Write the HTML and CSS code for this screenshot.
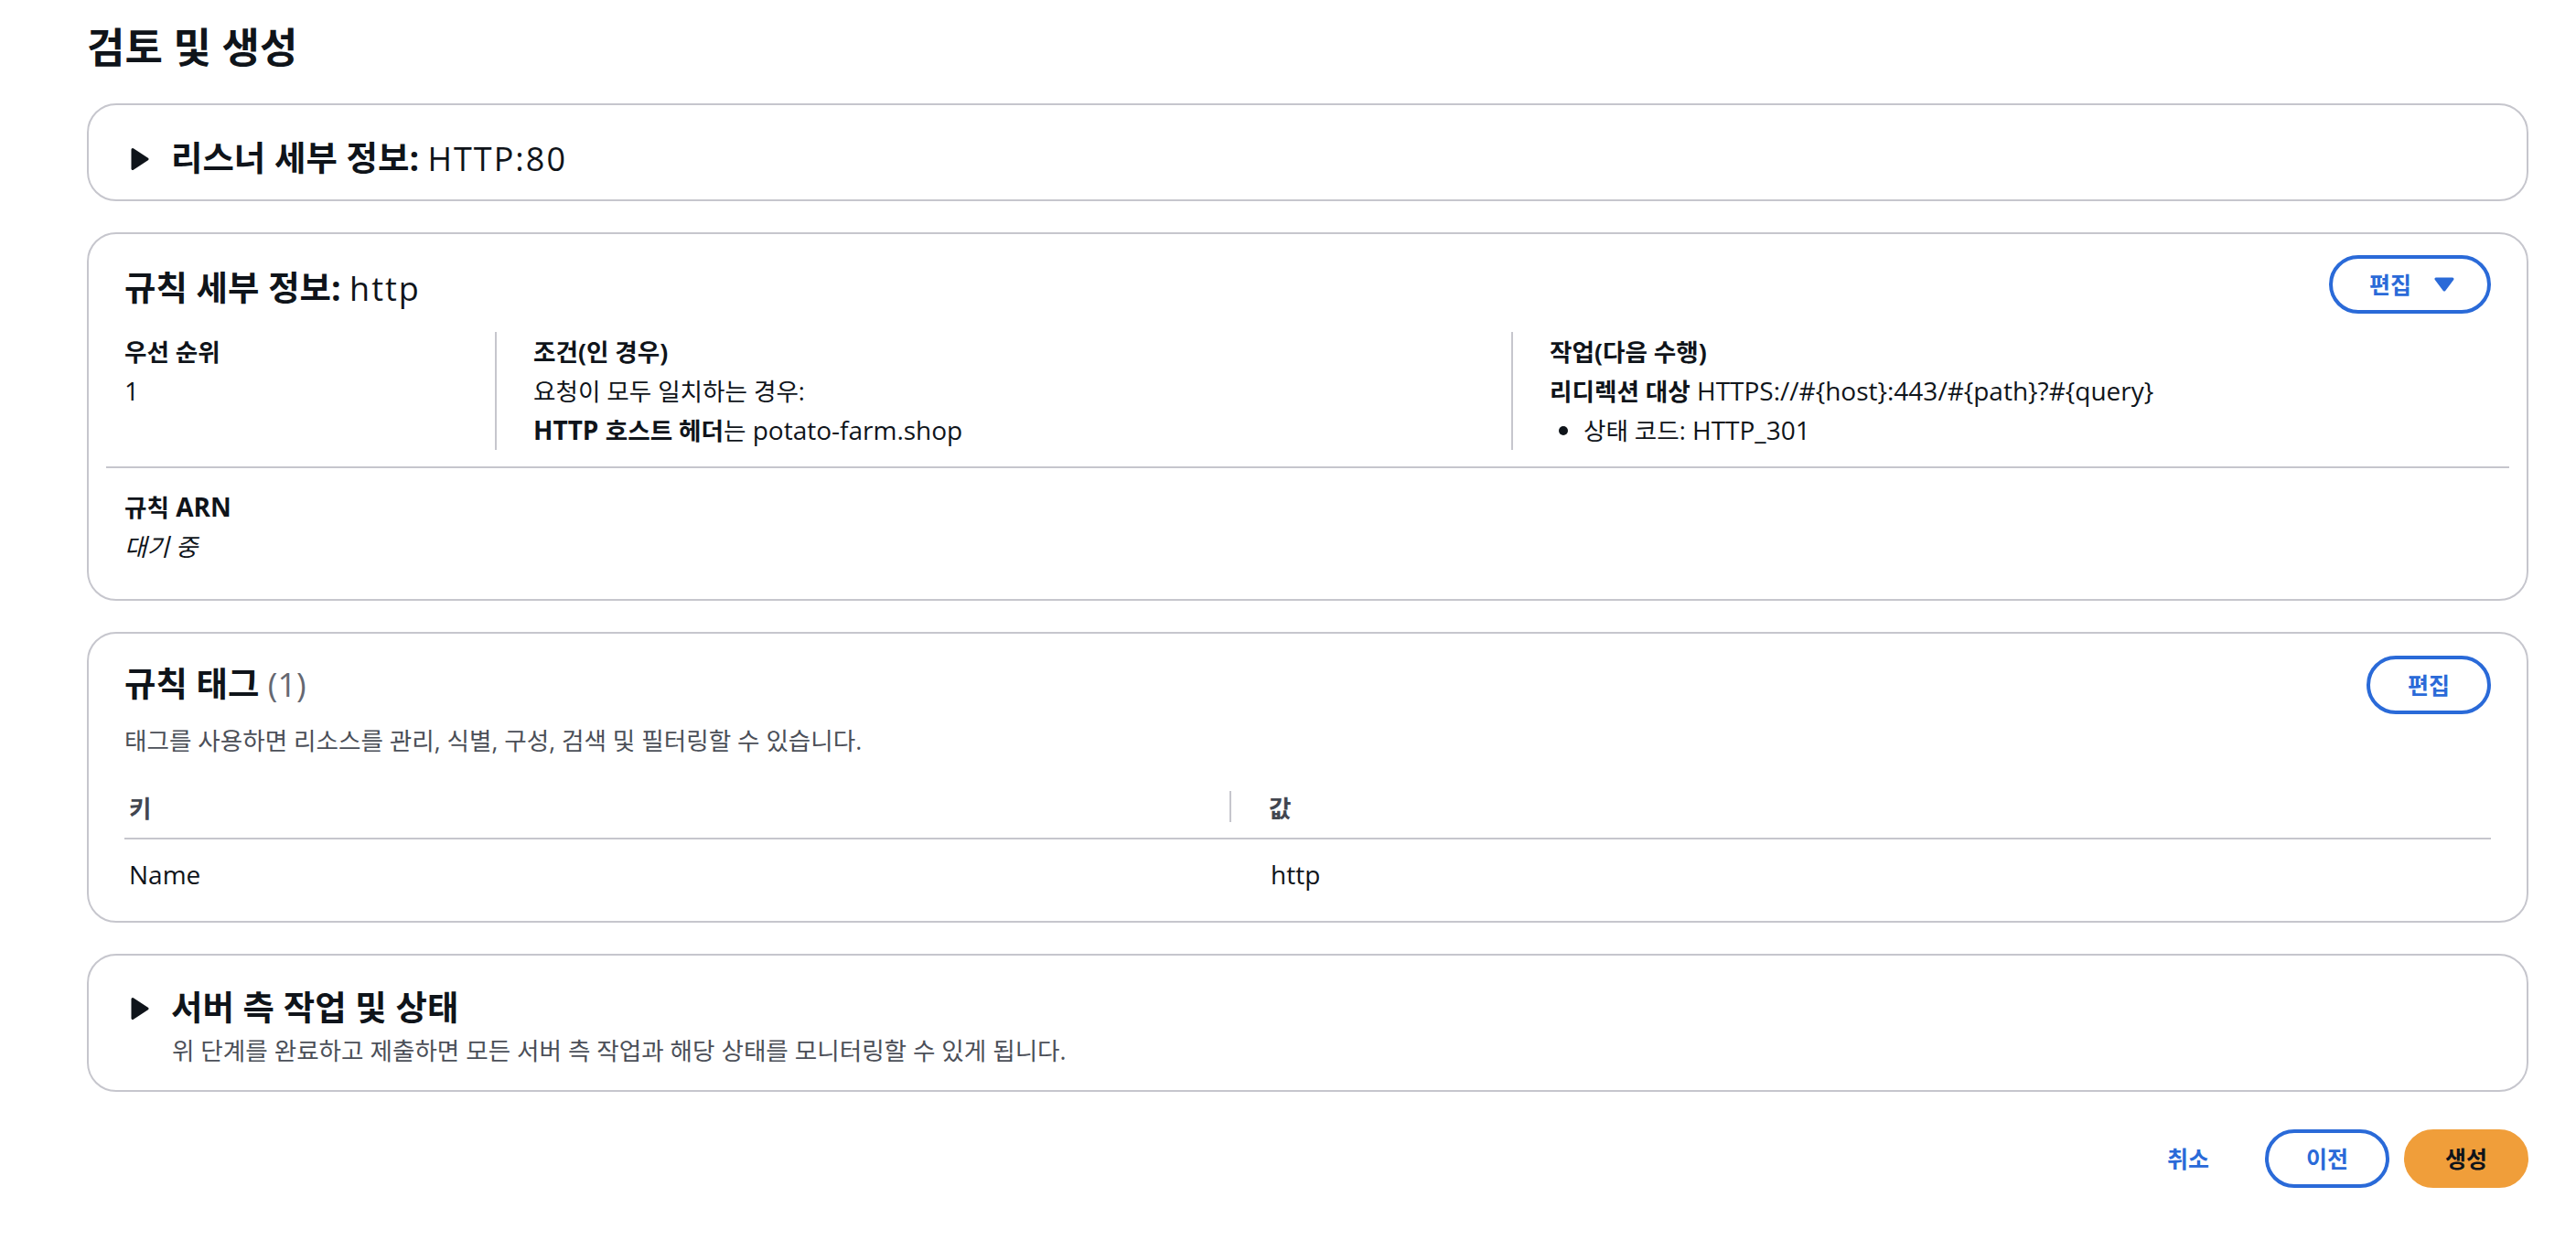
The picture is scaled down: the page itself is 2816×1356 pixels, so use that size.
FILE: index.html
```html
<!DOCTYPE html>
<html lang="ko">
<head>
<meta charset="utf-8">
<title>검토 및 생성</title>
<link rel="stylesheet" href="styles.css">
</head>
<body>
<main class="page">
  <h1 class="page-title">검토 및 생성</h1>

  <section class="card card-collapsed">
    <div class="exp-header">
      <svg class="caret" width="20" height="24" viewBox="0 0 20 24"><polygon points="2,1.5 18,12 2,22.5" /></svg>
      <h2 class="card-title"><span class="hk">리스너 세부 정보:</span> <span class="light">HTTP:80</span></h2>
    </div>
  </section>

  <section class="card card-rule">
    <div class="card-header">
      <h2 class="card-title title-offset"><span class="hk">규칙 세부 정보:</span> <span class="light">http</span></h2>
      <button class="btn btn-normal btn-dropdown" type="button"><span class="btn-label">편집</span><svg class="drop" width="22" height="16" viewBox="0 0 22 16"><polygon points="2,2 20,2 11,14" /></svg></button>
    </div>
    <div class="kv-grid">
      <div class="kv-col">
        <div class="kv-label"><span class="k">우선 순위</span></div>
        <div>1</div>
      </div>
      <div class="kv-col kv-sep">
        <div class="kv-label"><span class="k">조건(인 경우)</span></div>
        <div><span class="k">요청이 모두 일치하는 경우:</span></div>
        <div><b>HTTP <span class="k">호스트 헤더</span></b><span class="k">는</span> potato-farm.shop</div>
      </div>
      <div class="kv-col kv-sep">
        <div class="kv-label"><span class="k">작업(다음 수행)</span></div>
        <div><b><span class="k">리디렉션 대상</span></b> HTTPS://#{host}:443/#{path}?#{query}</div>
        <ul class="bullets">
          <li><span class="k">상태 코드:</span> HTTP_301</li>
        </ul>
      </div>
    </div>
    <hr class="divider">
    <div class="kv-col">
      <div class="kv-label"><span class="k">규칙</span> ARN</div>
      <div class="pending"><span class="k">대기 중</span></div>
    </div>
  </section>

  <section class="card card-tags">
    <div class="card-header">
      <div class="header-main">
        <h2 class="card-title title-offset-sm"><span class="hk">규칙 태그</span> <span class="counter">(1)</span></h2>
        <p class="desc"><span class="k">태그를 사용하면 리소스를 관리, 식별, 구성, 검색 및 필터링할 수 있습니다.</span></p>
      </div>
      <button class="btn btn-normal" type="button"><span class="btn-label">편집</span></button>
    </div>
    <div class="tag-table">
      <div class="th"><span class="k">키</span></div>
      <div class="th th-sep"><span class="k">값</span></div>
      <div class="td">Name</div>
      <div class="td td-2">http</div>
    </div>
  </section>

  <section class="card card-server">
    <div class="exp-header">
      <svg class="caret" width="20" height="24" viewBox="0 0 20 24"><polygon points="2,1.5 18,12 2,22.5" /></svg>
      <h2 class="card-title"><span class="hk">서버 측 작업 및 상태</span></h2>
    </div>
    <p class="desc indent"><span class="k">위 단계를 완료하고 제출하면 모든 서버 측 작업과 해당 상태를 모니터링할 수 있게 됩니다.</span></p>
  </section>

  <div class="actions">
    <button class="btn btn-link" type="button"><span class="btn-label">취소</span></button>
    <button class="btn btn-normal" type="button"><span class="btn-label">이전</span></button>
    <button class="btn btn-primary" type="button"><span class="btn-label">생성</span></button>
  </div>
</main>
</body>
</html>
```

FILE: styles.css
```css
* {
  box-sizing: border-box;
}

html,
body {
  margin: 0;
  background: #ffffff;
}

body {
  font-family: "Open Sans", "Noto Sans CJK KR", sans-serif;
  font-size: 28px;
  line-height: 42px;
  color: #0f141a;
}

.k {
  font-family: "Open Sans", "Noto Sans CJK KR", sans-serif;
  font-size: 0.95em;
}

.hk {
  font-size: 1.04em;
  font-weight: 700;
}

.page {
  padding: 24px 52px 40px 95px;
}

.page-title {
  margin: 0;
  font-size: 45px;
  line-height: 55px;
  font-weight: 700;
  font-family: "Open Sans", "Noto Sans CJK KR", sans-serif;
}

/* Containers */
.card {
  border: 2px solid #c6c6cd;
  border-radius: 32px;
  margin-top: 34px;
  padding: 0 39px;
  background: #ffffff;
}

.card-collapsed {
  padding-top: 36px;
  padding-bottom: 22px;
}

.card-rule {
  padding-top: 23px;
  padding-bottom: 36px;
}

.card-tags {
  padding-top: 24px;
  padding-bottom: 30px;
}

.card-server {
  padding-top: 35px;
  padding-bottom: 22px;
}

.card-title {
  margin: 0;
  font-size: 36px;
  line-height: 44px;
  font-weight: 700;
}

.card-title .light {
  font-weight: 400;
  letter-spacing: 2px;
}

.card-title .counter {
  font-weight: 400;
  color: #656871;
}

.title-offset {
  margin-top: 14px;
}

.title-offset-sm {
  margin-top: 9px;
}

.exp-header {
  display: flex;
  align-items: center;
  gap: 24px;
}

.caret {
  margin-left: 7px;
  flex: none;
  display: block;
  color: #0f141a;
}

.caret polygon,
.drop polygon {
  fill: currentColor;
  stroke: currentColor;
  stroke-width: 3;
  stroke-linejoin: round;
}

.card-header {
  display: flex;
  justify-content: space-between;
  align-items: flex-start;
}

.header-main {
  display: flex;
  flex-direction: column;
}

.desc {
  margin: 0;
  color: #4b4f58;
}

.card-tags .desc {
  margin-top: 17px;
}

.desc.indent {
  margin-top: 2px;
  padding-left: 52px;
}

/* Buttons */
.btn {
  font-family: "Open Sans", "Noto Sans CJK KR", sans-serif;
  font-size: 25px;
  font-weight: 700;
  height: 64px;
  line-height: 56px;
  border-radius: 32px;
  padding: 0 41px;
  border: 4px solid transparent;
  background: transparent;
  display: inline-flex;
  align-items: center;
  cursor: pointer;
  flex: none;
}

.btn-normal {
  border-color: #2a6ad8;
  color: #2a6ad8;
  background: #ffffff;
}

.btn-dropdown {
  padding-left: 40px;
  padding-right: 36px;
  gap: 25px;
}

.drop {
  display: block;
  color: #2a6ad8;
}

.btn-link {
  color: #2a6ad8;
}

.btn-primary {
  background: #f09e3a;
  border-color: #f09e3a;
  color: #0f141a;
}

/* Key-value grid */
.kv-grid {
  display: grid;
  grid-template-columns: 405fr 1111fr 1071fr;
  margin-top: 20px;
}

.kv-col {
  display: flex;
  flex-direction: column;
}

.kv-sep {
  border-left: 2px solid #c6c6cd;
  padding-left: 40px;
}

.kv-label {
  font-weight: 700;
}

.bullets {
  margin: 0;
  padding-left: 37px;
}

.bullets li {
  list-style: disc;
}

.divider {
  border: 0;
  border-top: 2px solid #c6c6cd;
  margin: 18px -20px 21px;
  height: 0;
}

.pending {
  font-style: italic;
}

/* Tag table */
.tag-table {
  display: grid;
  grid-template-columns: 1208fr 1379fr;
  margin-top: 31px;
}

.th {
  font-weight: 700;
  color: #424650;
  padding: 0 0 11px 5px;
  border-bottom: 2px solid #c6c6cd;
  position: relative;
}

.th-sep {
  padding-left: 43px;
}

.th-sep::before {
  content: "";
  position: absolute;
  left: 0;
  top: 3px;
  width: 2px;
  height: 34px;
  background: #c6c6cd;
}

.td {
  padding: 17px 0 0 5px;
}

.td-2 {
  padding-left: 45px;
}

/* Footer actions */
.actions {
  display: flex;
  justify-content: flex-end;
  gap: 16px;
  margin-top: 41px;
}
```
